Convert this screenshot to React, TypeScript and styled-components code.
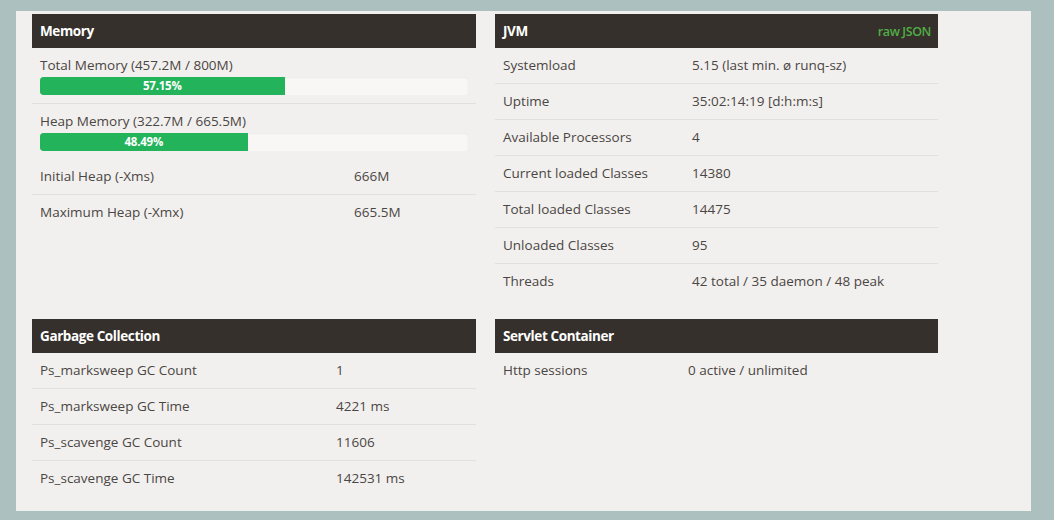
import React from "react";
import styled, { createGlobalStyle } from "styled-components";

const GlobalStyle = createGlobalStyle`
  html, body {
    margin: 0;
    padding: 0;
    background: #abc0bf;
  }
  body {
    font-family: "Open Sans", "Liberation Sans", sans-serif;
    color: #4a4643;
  }
`;

const Page = styled.div`
  padding: 11px 0 9px 16px;
`;

const Panel = styled.div`
  box-sizing: border-box;
  width: 1015px;
  height: 500px;
  background: #f2f0ee;
  padding: 3px 16px;
  display: grid;
  grid-template-columns: 444px 443px;
  grid-template-rows: auto 1fr;
  column-gap: 19px;
  row-gap: 20px;
  align-items: start;
`;

const Section = styled.section`
  display: flex;
  flex-direction: column;
`;

const Header = styled.div`
  height: 34px;
  background: #36302c;
  display: flex;
  align-items: center;
  justify-content: space-between;
  padding: 0 7px 0 8px;
  color: #fff;
  font-size: 13.5px;
  font-weight: 700;
  letter-spacing: -0.4px;
`;

const RawLink = styled.a`
  color: #4fae45;
  font-size: 12.5px;
  font-weight: 600;
  letter-spacing: -0.4px;
  text-decoration: none;
`;

const Row = styled.div<{ $labelWidth: number }>`
  display: grid;
  grid-template-columns: ${(p) => p.$labelWidth}px 1fr;
  padding: 8px 8px;
  line-height: 19px;
  font-size: 13.5px;
  & + & {
    border-top: 1px solid #e2dfdc;
  }
`;

const BarRow = styled.div`
  padding: 8px 8px 8px;
  font-size: 13.5px;
  line-height: 18px;
  & + & {
    border-top: 1px solid #e2dfdc;
  }
`;

const Track = styled.div`
  margin-top: 3px;
  height: 18px;
  background: #f8f7f6;
  border-radius: 3px;
  box-shadow: inset 0 1px 2px rgba(0, 0, 0, 0.06);
  overflow: hidden;
`;

const Fill = styled.div`
  height: 100%;
  background: #23b35a;
  border-radius: 3px 0 0 3px;
  color: #fff;
  font-size: 11.5px;
  font-weight: 700;
  line-height: 18px;
  text-align: center;
  letter-spacing: -0.2px;
`;

type Pair = [string, string];

const Bar: React.FC<{ label: string; pct: number }> = ({ label, pct }) => (
  <BarRow>
    <div>{label}</div>
    <Track>
      <Fill style={{ width: `${pct}%` }}>{pct.toFixed(2)}%</Fill>
    </Track>
  </BarRow>
);

const Rows: React.FC<{ rows: Pair[]; labelWidth: number }> = ({ rows, labelWidth }) => (
  <>
    {rows.map(([k, v]) => (
      <Row key={k} $labelWidth={labelWidth}>
        <span>{k}</span>
        <span>{v}</span>
      </Row>
    ))}
  </>
);

const jvm: Pair[] = [
  ["Systemload", "5.15 (last min. ø runq-sz)"],
  ["Uptime", "35:02:14:19 [d:h:m:s]"],
  ["Available Processors", "4"],
  ["Current loaded Classes", "14380"],
  ["Total loaded Classes", "14475"],
  ["Unloaded Classes", "95"],
  ["Threads", "42 total / 35 daemon / 48 peak"],
];

const gc: Pair[] = [
  ["Ps_marksweep GC Count", "1"],
  ["Ps_marksweep GC Time", "4221 ms"],
  ["Ps_scavenge GC Count", "11606"],
  ["Ps_scavenge GC Time", "142531 ms"],
];

const App: React.FC = () => (
  <Page>
    <GlobalStyle />
    <Panel>
      <Section>
        <Header>Memory</Header>
        <Bar label="Total Memory (457.2M / 800M)" pct={57.15} />
        <Bar label="Heap Memory (322.7M / 665.5M)" pct={48.49} />
        <Rows
          labelWidth={314}
          rows={[
            ["Initial Heap (-Xms)", "666M"],
            ["Maximum Heap (-Xmx)", "665.5M"],
          ]}
        />
      </Section>

      <Section>
        <Header>
          JVM
          <RawLink href="#">raw JSON</RawLink>
        </Header>
        <Rows labelWidth={189} rows={jvm} />
      </Section>

      <Section>
        <Header>Garbage Collection</Header>
        <Rows labelWidth={296} rows={gc} />
      </Section>

      <Section>
        <Header>Servlet Container</Header>
        <Rows labelWidth={185} rows={[["Http sessions", "0 active / unlimited"]]} />
      </Section>
    </Panel>
  </Page>
);

export default App;
